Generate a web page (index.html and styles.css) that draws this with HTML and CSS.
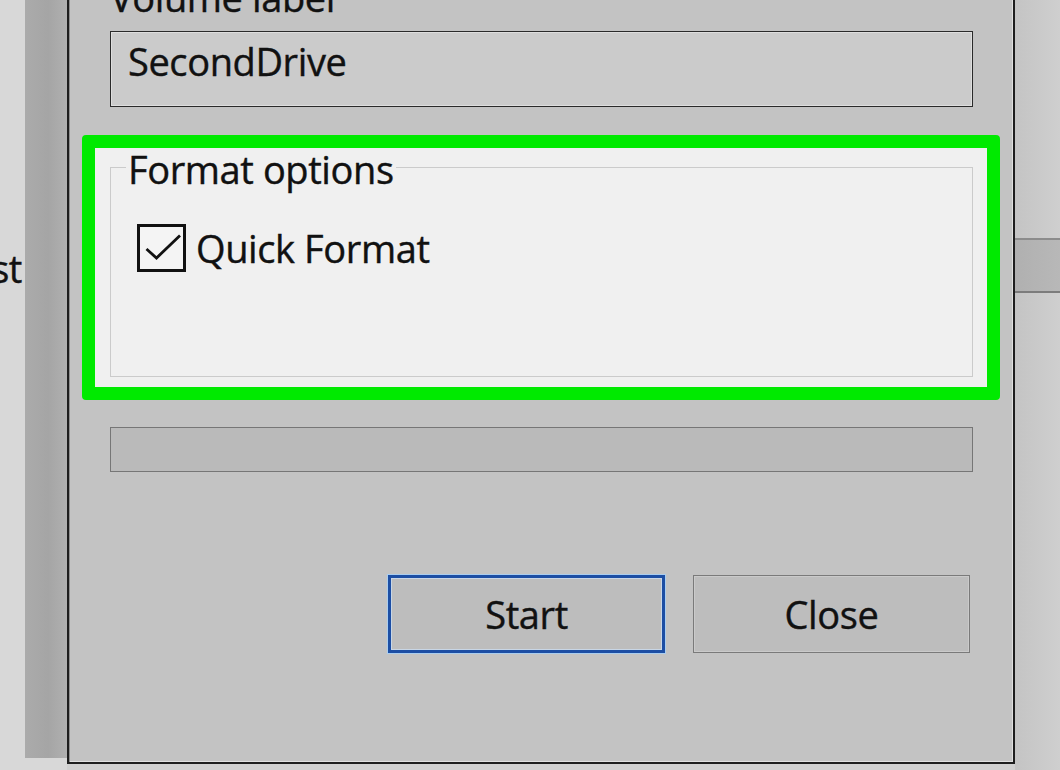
FILE: index.html
```html
<!DOCTYPE html>
<html>
    <head>
        <meta charset='utf-8'/>
        <title>Format SecondDrive</title>
        <link rel="stylesheet" href="styles.css">
    </head>
    <body>
        <div id="desk">
            <div class="side-left">
                <div class="edge"><span class="peek">st</span></div>
                <div class="shade"></div>
            </div>

            <div class="dialog">
                <div class="label">Volume label</div>
                <div class="textbox">SecondDrive</div>

                <div class="highlight">
                    <fieldset class="group">
                        <legend>Format options</legend>
                        <label class="check">
                            <span class="box">
                                <svg viewBox="0 0 42 42" width="42" height="42">
                                    <polyline points="6.5,22 16.5,31 40,8.5" fill="none" stroke="#111" stroke-width="2.8"/>
                                </svg>
                            </span>
                            Quick Format
                        </label>
                    </fieldset>
                </div>

                <div class="progress"></div>

                <div class="buttons">
                    <button class="btn default">Start</button>
                    <button class="btn">Close</button>
                </div>
            </div>

            <div class="side-right">
                <div class="bar"></div>
            </div>
        </div>
    </body>
</html>
```

FILE: styles.css
```css
* {
    margin: 0;
    padding: 0;
    box-sizing: border-box;
}

body {
    width: 1060px;
    height: 770px;
    overflow: hidden;
    background: #d0d0d0;
    font-family: "Open Sans", "Noto Sans", sans-serif;
    font-size: 38px;
    letter-spacing: -0.4px;
    color: #111;
    -webkit-text-stroke: 0.4px #111;
}

#desk {
    display: flex;
    height: 770px;
}

/* background on the left */
.side-left {
    display: flex;
    width: 67px;
    flex-shrink: 0;
    background: #d8d8d8;
}

.edge {
    width: 25px;
    overflow: hidden;
    display: flex;
    justify-content: flex-end;
    padding-top: 237px;
    line-height: 62px;
}

.peek {
    display: block;
    white-space: nowrap;
    padding-right: 3px;
}

.shade {
    width: 42px;
    height: 758px;
    background: linear-gradient(90deg, #ababab, #a5a5a5 55%, #b0b0b0);
}

/* the dialog */
.dialog {
    width: 948px;
    height: 789px;
    margin-top: -25px;
    flex-shrink: 0;
    background: #c3c3c3;
    border: 2px solid #1e1e1e;
    border-top: none;
    box-shadow: inset 1px 0 0 #8e8e8e, inset -1px 0 0 #e0e0e0, inset 0 -1px 0 #e0e0e0;
    padding: 0 40px 0 41px;
}

.label {
    line-height: 44px;
    margin-bottom: 12px;
}

.textbox {
    height: 76px;
    border: 1px solid #2a2a2a;
    box-shadow: inset 0 0 0 1px #dedede;
    background: #cbcbcb;
    padding: 7px 0 0 17px;
    line-height: 44px;
}

.highlight {
    margin: 28px -27px 0 -28px;
    border: 13px solid #00ea00;
    border-radius: 4px;
    background: #f0f0f0;
    padding: 0 14px 10px 15px;
}

.group {
    min-width: 0;
    height: 229px;
    border: 1px solid #cbcbcb;
    padding: 0 0 0 15px;
}

.group legend {
    padding: 3px 2px 0;
    line-height: 36px;
}

.check {
    display: flex;
    align-items: center;
    gap: 10px;
    margin: 37px 0 0 11px;
    line-height: 44px;
}

.box {
    width: 49px;
    height: 48px;
    border: 3px solid #111;
    background: #f4f4f4;
}

.box svg {
    display: block;
}

.progress {
    height: 45px;
    margin-top: 27px;
    border: 1px solid #767676;
    background: #bababa;
}

.buttons {
    display: flex;
    justify-content: flex-end;
    gap: 28px;
    margin-top: 103px;
    padding-right: 3px;
}

.btn {
    width: 277px;
    height: 78px;
    font: inherit;
    letter-spacing: inherit;
    color: #111;
    background: #bdbdbd;
    border: 1px solid #7a7a7a;
    box-shadow: inset 0 0 0 1px #cacaca;
}

.btn.default {
    border: 3px solid #1c4ea4;
    box-shadow: 0 0 0 1px #a9cdef, inset 0 0 0 1px #c8d6e6;
}

/* background on the right */
.side-right {
    flex: 1;
    padding-top: 238px;
    background: linear-gradient(90deg, #c4c4c4, #cfcfcf);
}

.bar {
    height: 55px;
    border-top: 2px solid #8c8c8c;
    border-bottom: 2px solid #7c7c7c;
    background: linear-gradient(90deg, #b0b0b0, #b8b8b8);
}
```
